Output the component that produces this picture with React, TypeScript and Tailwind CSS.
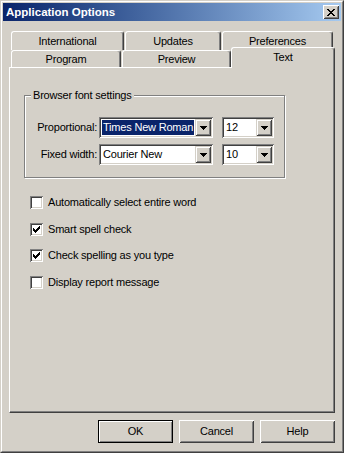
import React from "react";

function Pix({ rows, color = "#000" }: { rows: string[]; color?: string }) {
  const w = rows[0].length;
  const h = rows.length;
  return (
    <svg width={w} height={h} viewBox={`0 0 ${w} ${h}`} shapeRendering="crispEdges" className="block">
      {rows.flatMap((r, y) =>
        r.split("").map((c, x) =>
          c === "X" ? <rect key={`${x}-${y}`} x={x} y={y} width={1} height={1} fill={color} /> : null
        )
      )}
    </svg>
  );
}

const closeX = [
  "XX....XX",
  ".XX..XX.",
  "..XXXX..",
  "...XX...",
  "..XXXX..",
  ".XX..XX.",
  "XX....XX",
];

const arrow = ["XXXXXXX", ".XXXXX.", "..XXX..", "...X..."];

const check = [
  "......X",
  ".....XX",
  "X...XXX",
  "XX.XXX.",
  "XXXXX..",
  ".XXX...",
  "..X....",
];

const raised =
  "shadow-[inset_1px_1px_0_#fff,inset_-1px_-1px_0_#404040,inset_2px_2px_0_#d4d0c8,inset_-2px_-2px_0_#808080]";
const comboBtn =
  "shadow-[inset_1px_1px_0_#d4d0c8,inset_-1px_-1px_0_#404040,inset_2px_2px_0_#fff,inset_-2px_-2px_0_#808080]";
const sunken =
  "shadow-[inset_1px_1px_0_#808080,inset_-1px_-1px_0_#fff,inset_2px_2px_0_#404040,inset_-2px_-2px_0_#d4d0c8]";

function Tab({ label, w, selected = false }: { label: string; w: string; selected?: boolean }) {
  return (
    <div
      className={`${w} ${
        selected ? "-mt-[3px] h-[21px] relative z-10 pb-[2px]" : "h-full"
      } flex items-center justify-center bg-[#d4d0c8] border-l border-t border-r border-l-white border-t-white border-r-[#404040] rounded-t-[3px] shadow-[inset_-1px_0_0_#808080]`}
    >
      {label}
    </div>
  );
}

function Combo({ value, w, selected = false }: { value: string; w: string; selected?: boolean }) {
  return (
    <div className={`${w} h-[21px] p-[2px] bg-white flex ${sunken}`}>
      <div className="flex-1 flex p-[1px]">
        <div className={`flex-1 flex items-center pl-[1px] ${selected ? "bg-[#0a246a] text-white" : "text-black"}`}>
          {value}
        </div>
      </div>
      <div className={`w-[16px] h-[17px] bg-[#d4d0c8] flex items-center justify-center ${comboBtn}`}>
        <Pix rows={arrow} />
      </div>
    </div>
  );
}

function Check({ label, checked = false }: { label: string; checked?: boolean }) {
  return (
    <div className="flex items-center h-[13px]">
      <div className={`w-[13px] h-[13px] bg-white flex items-center justify-center ${sunken}`}>
        {checked && <Pix rows={check} />}
      </div>
      <span className="ml-[5px]">{label}</span>
    </div>
  );
}

function Button({ label, def = false }: { label: string; def?: boolean }) {
  return (
    <div
      className={`w-[75px] h-[23px] flex items-center justify-center bg-[#d4d0c8] ${
        def
          ? "border border-black shadow-[inset_1px_1px_0_#fff,inset_-1px_-1px_0_#808080]"
          : raised
      }`}
    >
      {label}
    </div>
  );
}

export default function App() {
  return (
    <div className="w-[344px] h-[453px] overflow-hidden bg-[#d4d0c8] font-['Liberation_Sans',Arial,sans-serif] text-[11px] tracking-[-0.2px] text-black leading-[13px]">
      <div className="w-full h-full border border-t-[#d4d0c8] border-l-[#d4d0c8] border-r-[#404040] border-b-[#404040]">
        <div className="w-full h-full border border-t-white border-l-white border-r-[#808080] border-b-[#808080] p-[1px] flex flex-col">
          {/* Title bar */}
          <div className="h-[18px] flex items-center bg-gradient-to-r from-[#0a246a] to-[#a6caf0] pl-[3px] pr-[2px]">
            <span className="text-white font-bold text-[11.5px] tracking-normal flex-1">Application Options</span>
            <div className={`w-[16px] h-[14px] bg-[#d4d0c8] flex items-center justify-center ${raised}`}>
              <Pix rows={closeX} />
            </div>
          </div>

          {/* Body */}
          <div className="px-[6px] flex flex-col">
            <div className="mt-[10px] h-[19px] flex gap-[1px] pl-[2px]">
              <Tab label="International" w="w-[113px]" />
              <Tab label="Updates" w="w-[96px]" />
              <Tab label="Preferences" w="w-[111px]" />
            </div>
            <div className="h-[17px] flex items-start pl-[2px]">
              <Tab label="Program" w="w-[110px]" />
              <div className="w-[1px]" />
              <Tab label="Preview" w="w-[109px]" />
              <Tab label="Text" w="w-[104px]" selected />
            </div>

            {/* Panel */}
            <div className="w-[326px] h-[346px] border-l border-t border-r border-b border-l-white border-t-white border-r-[#404040] border-b-[#404040] shadow-[inset_-1px_-1px_0_#808080] flex flex-col">
              <div className="ml-[14px] mt-[27px] w-[261px] h-[83px] relative border border-[#808080] shadow-[inset_1px_1px_0_#fff,1px_1px_0_#fff] pt-[21px] pl-[3px] flex flex-col gap-[6px]">
                <span className="absolute -top-[7px] left-[6px] px-[2px] bg-[#d4d0c8]">Browser font settings</span>
                <div className="flex items-center">
                  <span className="w-[69px] text-right mr-[2px]">Proportional:</span>
                  <Combo value="Times New Roman" w="w-[114px]" selected />
                  <div className="w-[9px]" />
                  <Combo value="12" w="w-[52px]" />
                </div>
                <div className="flex items-center">
                  <span className="w-[69px] text-right mr-[2px]">Fixed width:</span>
                  <Combo value="Courier New" w="w-[114px]" />
                  <div className="w-[9px]" />
                  <Combo value="10" w="w-[52px]" />
                </div>
              </div>

              <div className="mt-[18px] pl-[20px] flex flex-col gap-[13.5px]">
                <Check label="Automatically select entire word" />
                <Check label="Smart spell check" checked />
                <Check label="Check spelling as you type" checked />
                <Check label="Display report message" />
              </div>
            </div>

            {/* Buttons */}
            <div className="mt-[7px] flex justify-end gap-[6px]">
              <Button label="OK" def />
              <Button label="Cancel" />
              <Button label="Help" />
            </div>
          </div>
        </div>
      </div>
    </div>
  );
}
